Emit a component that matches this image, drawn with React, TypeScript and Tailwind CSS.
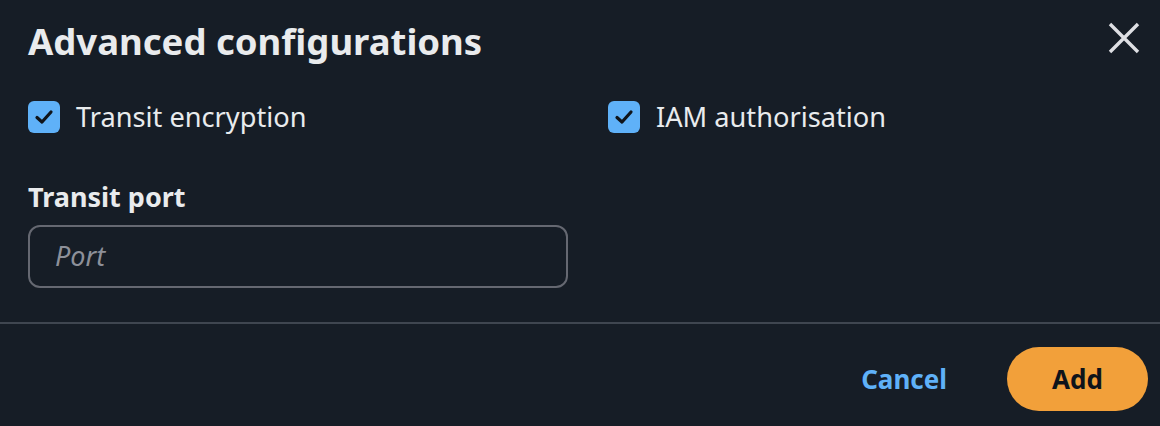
import React from "react";

function Check() {
  return (
    <span className="flex h-[32px] w-[32px] shrink-0 items-center justify-center rounded-[6px] bg-[#5fb1f8]">
      <svg width="22" height="22" viewBox="0 0 22 22" fill="none">
        <path d="M4 11.5 L9 16 L18 6" stroke="#0f141a" strokeWidth="3.2" strokeLinecap="round" strokeLinejoin="round" />
      </svg>
    </span>
  );
}

export default function App() {
  return (
    <div
      className="h-[426px] w-[1160px] overflow-hidden bg-[#161d26] text-[#e9ebed]"
      style={{ fontFamily: '"Noto Sans", "Open Sans", sans-serif' }}
    >
      <div className="flex items-start justify-between pl-[28px] pr-[20px] pt-[17px]">
        <h1 className="text-[36.5px] font-bold leading-[48px]">Advanced configurations</h1>
        <button className="mt-[5px] flex h-[32px] w-[32px] items-center justify-center">
          <svg width="32" height="32" viewBox="0 0 32 32" fill="none">
            <path d="M2 2 L30 30 M30 2 L2 30" stroke="#dedfe3" strokeWidth="3.4" />
          </svg>
        </button>
      </div>

      <div className="mt-[36px] grid grid-cols-[580px_1fr] pl-[28px]">
        <label className="flex items-center gap-[16px]">
          <Check />
          <span className="text-[27.2px] leading-[32px]">Transit encryption</span>
        </label>
        <label className="flex items-center gap-[16px]">
          <Check />
          <span className="text-[27.2px] leading-[32px]">IAM authorisation</span>
        </label>
      </div>

      <div className="mt-[47px] pl-[28px]">
        <div className="text-[27px] font-bold leading-[34px]">Transit port</div>
        <div className="mt-[11px] flex h-[63px] w-[540px] items-center rounded-[12px] border-2 border-[#656871] px-[25px]">
          <span className="text-[27px] italic text-[#8d9099]">Port</span>
        </div>
      </div>

      <div className="mt-[34px] h-[2px] w-full bg-[#3f4650]" />

      <div className="flex items-center justify-end gap-[60px] pr-[12px] pt-[23px]">
        <button className="text-[26px] font-bold text-[#5fb1f8]">Cancel</button>
        <button className="flex h-[64px] w-[141px] items-center justify-center rounded-full bg-[#f2a03a] text-[26px] font-bold text-[#0f141a]">
          Add
        </button>
      </div>
    </div>
  );
}
